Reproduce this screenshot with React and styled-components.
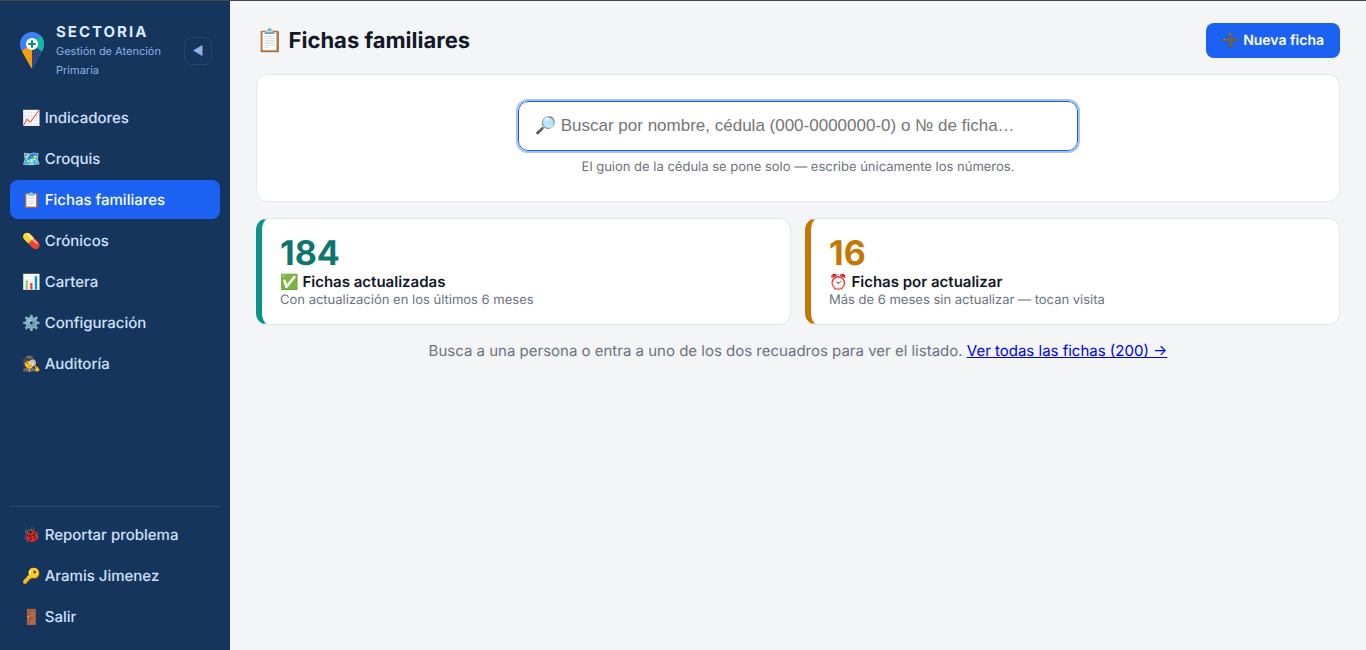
import styled, { createGlobalStyle } from "styled-components";

const mainLinks = [
    { icon: "📈", text: "Indicadores" },
    { icon: "🗺️", text: "Croquis" },
    { icon: "📋", text: "Fichas familiares", active: true },
    { icon: "💊", text: "Crónicos" },
    { icon: "📊", text: "Cartera" },
    { icon: "⚙️", text: "Configuración" },
    { icon: "🕵️", text: "Auditoría" },
];

const userLinks = [
    { icon: "🐞", text: "Reportar problema" },
    { icon: "🔑", text: "Aramis Jimenez" },
    { icon: "🚪", text: "Salir" },
];

const Logo = () => (
    <svg width="24" height="37" viewBox="0 0 24 37" aria-hidden="true">
        <defs>
            <clipPath id="pin">
                <path d="M12 0C5.400 0 0 5.400 0 12c0 3 .8 5 2 7.300L11 35.600q1 1.400 2 0L22 19.300c1.200-2.300 2-4.300 2-7.300C24 5.400 18.600 0 12 0z" />
            </clipPath>
        </defs>
        <g clipPath="url(#pin)">
            <rect width="24" height="37" fill="#3b82f6" />
            <path d="M12 12L21 3h3v18h-2z" fill="#14b8a6" />
            <path d="M12 12L1 19.500V37h11z" fill="#f59e0b" />
            <path d="M12 12l11 8.500V37H12z" fill="#2b4878" />
        </g>
        <circle cx="12" cy="12" r="6" fill="#fff" />
        <path d="M12 9v6M9 12h6" stroke="#0f8a7e" strokeWidth="2" strokeLinecap="round" />
    </svg>
);

const NavLink = ({ icon, text, active }) => (
    <NAVLINK href="#" $active={active} aria-current={active ? "page" : undefined}>
        {icon} {text}
    </NAVLINK>
);

export default function App() {
    return (
        <>
            <GlobalStyle />
            <LAYOUT>
                <SIDEBAR>
                    <BRAND>
                        <Logo />
                        <div className="names">
                            <div className="name">SECTORIA</div>
                            <div className="tagline">Gestión de Atención Primaria</div>
                        </div>
                        <button type="button" className="collapse" aria-label="Contraer menú">◀</button>
                    </BRAND>
                    <NAV>
                        {mainLinks.map((link) => <NavLink key={link.text} {...link} />)}
                    </NAV>
                    <USERNAV>
                        {userLinks.map((link) => <NavLink key={link.text} {...link} />)}
                    </USERNAV>
                </SIDEBAR>
                <MAIN>
                    <HEADER>
                        <h1>📋 Fichas familiares</h1>
                        <PRIMARYBUTTON type="button">➕ Nueva ficha</PRIMARYBUTTON>
                    </HEADER>
                    <SEARCHCARD>
                        <input
                            type="text"
                            aria-label="Buscar fichas"
                            aria-describedby="search-hint"
                            placeholder="🔎 Buscar por nombre, cédula (000-0000000-0) o № de ficha…"
                        />
                        <p id="search-hint">El guion de la cédula se pone solo — escribe únicamente los números.</p>
                    </SEARCHCARD>
                    <STATS>
                        <STATCARD href="#" $edge="#0d9488" $color="#0f766e">
                            <div className="number">184</div>
                            <div className="label">✅ Fichas actualizadas</div>
                            <div className="detail">Con actualización en los últimos 6 meses</div>
                        </STATCARD>
                        <STATCARD href="#" $edge="#c27803" $color="#c27803">
                            <div className="number">16</div>
                            <div className="label">⏰ Fichas por actualizar</div>
                            <div className="detail">Más de 6 meses sin actualizar — tocan visita</div>
                        </STATCARD>
                    </STATS>
                    <FOOTNOTE>
                        Busca a una persona o entra a uno de los dos recuadros para ver el listado.{" "}
                        <a href="#">Ver todas las fichas (200) →</a>
                    </FOOTNOTE>
                </MAIN>
            </LAYOUT>
        </>
    );
}

const GlobalStyle = createGlobalStyle`
  * {
    box-sizing: border-box;
  }

  body {
    margin: 0;
    background: #f3f5f7;
    color: #111827;
    font-family: Inter, "Noto Sans", sans-serif;
    font-size: 15px;
    line-height: 23px;
    text-rendering: geometricPrecision;
  }
`;

const LAYOUT = styled.div`
  display: flex;
  min-height: 100vh;
  border-top: 1px solid #45464c;
`;

const SIDEBAR = styled.aside`
  display: flex;
  flex-direction: column;
  flex: none;
  width: 230px;
  padding: 20px 10px 14px;
  background: #16355d;
`;

const BRAND = styled.div`
  display: flex;
  align-items: center;
  gap: 12px;
  padding: 0 8px 0 10px;
  margin-bottom: 18px;

  svg {
    flex: none;
  }

  .names {
    flex: 1;
  }

  .name {
    color: #dbeafe;
    font-size: 15px;
    font-weight: 700;
    letter-spacing: 2px;
    line-height: 21px;
  }

  .tagline {
    color: #8fb0e6;
    font-size: 11px;
    line-height: 19px;
  }

  .collapse {
    flex: none;
    width: 28px;
    height: 28px;
    padding: 0;
    border: 1px solid #27456f;
    border-radius: 8px;
    background: transparent;
    color: #8fb0e6;
    font-family: inherit;
    font-size: 12px;
  }
`;

const NAV = styled.nav`
  display: flex;
  flex-direction: column;
  gap: 2px;
`;

const USERNAV = styled(NAV)`
  margin-top: auto;
  padding-top: 8px;
  border-top: 1px solid #2b4a75;
`;

const NAVLINK = styled.a`
  padding: 8px 12px;
  border-radius: 8px;
  background: ${({ $active }) => ($active ? "#1b62f2" : "transparent")};
  color: ${({ $active }) => ($active ? "#fff" : "#cfe0fa")};
  font-weight: 500;
  text-decoration: none;
`;

const MAIN = styled.main`
  flex: 1;
  min-width: 0;
  padding: 22px 26px;
`;

const HEADER = styled.header`
  display: flex;
  align-items: center;
  justify-content: space-between;
  margin-bottom: 16px;

  h1 {
    margin: 0;
    font-size: 22px;
    font-weight: 700;
    line-height: 34px;
  }
`;

const PRIMARYBUTTON = styled.button`
  height: 35px;
  padding: 0 16px;
  border: none;
  border-radius: 8px;
  background: #1b62f2;
  color: #fff;
  font-family: inherit;
  font-size: 14px;
  font-weight: 600;
  text-rendering: inherit;
`;

const CARD = styled.section`
  background: #fff;
  border: 1px solid #e5e7eb;
  border-radius: 12px;
`;

const SEARCHCARD = styled(CARD)`
  display: flex;
  flex-direction: column;
  align-items: center;
  padding: 26px 24px 24px;
  margin-bottom: 16px;

  input {
    width: 100%;
    max-width: 560px;
    height: 50px;
    padding: 0 16px;
    border: 1px solid #1d5bd6;
    border-radius: 10px;
    outline: 2px solid #a3c4fb;
    color: #111827;
    font-family: "Liberation Sans", Arial, sans-serif;
    font-size: 17px;
  }

  input::placeholder {
    color: #757575;
  }

  p {
    margin: 6px 0 0;
    color: #6b7280;
    font-size: 13px;
    line-height: 20px;
  }
`;

const STATS = styled.div`
  display: grid;
  grid-template-columns: 1fr 1fr;
  gap: 14px;
  margin-bottom: 14px;
`;

const STATCARD = styled(CARD).attrs({ as: "a" })`
  padding: 17px 18px 14px;
  border-left: 6px solid ${({ $edge }) => $edge};
  color: #111827;
  text-decoration: none;

  .number {
    color: ${({ $color }) => $color};
    font-size: 34px;
    font-weight: 700;
    line-height: 36px;
  }

  .label {
    font-weight: 600;
    line-height: 19px;
  }

  .detail {
    color: #6b7280;
    font-size: 13px;
    line-height: 19px;
  }
`;

const FOOTNOTE = styled.p`
  margin: 0;
  color: #6b7280;
  text-align: center;

  a {
    color: #0000ee;
  }
`;
